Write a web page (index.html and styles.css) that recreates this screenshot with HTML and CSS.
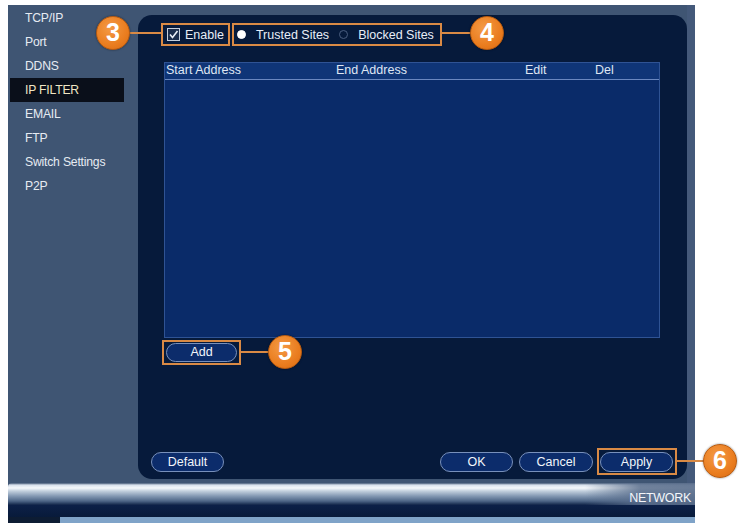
FILE: index.html
```html
<!DOCTYPE html>
<html>
<head>
<meta charset="utf-8">
<link rel="stylesheet" href="styles.css">
</head>
<body>
<div class="page">
  <div class="screen">
    <div class="top">
      <nav class="sidebar">
        <div class="nav-item">TCP/IP</div>
        <div class="nav-item">Port</div>
        <div class="nav-item">DDNS</div>
        <div class="nav-item active">IP FILTER</div>
        <div class="nav-item">EMAIL</div>
        <div class="nav-item">FTP</div>
        <div class="nav-item">Switch Settings</div>
        <div class="nav-item">P2P</div>
      </nav>
      <main class="panel">
        <div class="options">
          <div class="group group-enable">
            <span class="checkbox"><svg width="11" height="11" viewBox="0 0 11 11"><path d="M2 5.5 L4.5 8.5 L9.5 2" fill="none" stroke="#e8eef6" stroke-width="1.6"/></svg></span>
            <span>Enable</span>
          </div>
          <div class="group group-mode">
            <span class="radio on"></span><span>Trusted Sites</span>
            <span class="radio"></span><span>Blocked Sites</span>
          </div>
        </div>
        <div class="table">
          <div class="thead">
            <span>Start Address</span><span>End Address</span><span>Edit</span><span>Del</span>
          </div>
          <div class="tbody"></div>
        </div>
        <div class="add-row">
          <span class="annot annot-add"><button class="btn btn-add">Add</button></span>
        </div>
        <div class="footer">
          <button class="btn">Default</button>
          <div class="spacer"></div>
          <button class="btn">OK</button>
          <button class="btn btn-cancel">Cancel</button>
          <span class="annot annot-apply"><button class="btn">Apply</button></span>
        </div>
      </main>
      <div class="edge"></div>
    </div>
    <div class="bottom">
      <div class="gloss"><span class="title">NETWORK</span></div>
      <div class="band"></div>
      <div class="strip"><span class="tab"></span></div>
    </div>
  </div>

  <div class="line l3"></div>
  <div class="callout c3">3</div>
  <div class="line l4"></div>
  <div class="callout c4">4</div>
  <div class="line l5"></div>
  <div class="callout c5">5</div>
  <div class="line l6"></div>
  <div class="callout c6">6</div>
</div>
</body>
</html>
```

FILE: styles.css
```css
* { box-sizing: border-box; }
html, body { margin: 0; padding: 0; background: #ffffff; }
body {
  font-family: "Liberation Sans", Arial, sans-serif;
  width: 740px;
  height: 523px;
  overflow: hidden;
}
.page { position: relative; width: 740px; height: 523px; padding: 5px 0 0 8px; }

.screen {
  width: 687px;
  height: 518px;
  background: #3f5573;
  display: flex;
  flex-direction: column;
}
.top { display: flex; height: 478px; }

.sidebar {
  width: 130px;
  padding-top: 1px;
  display: flex;
  flex-direction: column;
}
.nav-item {
  height: 24px;
  line-height: 24px;
  margin-left: 2px;
  width: 114px;
  padding-left: 15px;
  font-size: 12.2px;
  color: #e6ebf2;
  letter-spacing: -0.2px;
}
.nav-item.active { background: #0a0f1a; color: #efe6c4; }

.panel {
  width: 549px;
  margin-top: 10px;
  height: 464px;
  background: #061a3b;
  border-radius: 14px;
  padding: 8px 10px 4px 13px;
  display: flex;
  flex-direction: column;
  color: #e8eef7;
  font-size: 12.5px;
}
.edge { width: 8px; background: #44597a; }

.options { display: flex; margin-left: 10px; height: 23px; }
.group {
  display: flex;
  align-items: center;
  border: 2px solid #d98a45;
  height: 23px;
}
.group-enable { padding: 0 4px; gap: 5px; }
.checkbox {
  width: 13px; height: 13px;
  border: 1px solid #c4cedb;
  background: #1a2d4c;
  display: flex; align-items: center; justify-content: center;
}
.group-mode { margin-left: 2px; padding: 0 6px 0 3px; }
.radio {
  width: 9px; height: 9px; border-radius: 50%;
  border: 1px solid #4a5e80;
  margin-right: 10px;
}
.radio.on { background: #ffffff; border-color: #ffffff; }
.group-mode span:nth-child(2) { margin-right: 10px; }

.table {
  margin-top: 16px;
  margin-left: 13px;
  width: 496px;
  height: 276px;
  border: 1px solid #2f5394;
  background: #0a2b69;
  display: flex;
  flex-direction: column;
}
.thead {
  display: grid;
  grid-template-columns: 170px 189px 70px 1fr;
  padding-left: 1px;
  height: 17px;
  line-height: 15px;
  background: #0f3577;
  border-bottom: 1px solid #6a88c0;
  color: #dfe7f3;
}
.tbody { flex: 1; }

.btn {
  font-family: "Liberation Sans", Arial, sans-serif;
  font-size: 12.5px;
  color: #f2f5fa;
  background: #0c2c6b;
  border: 1px solid #7890bb;
  border-radius: 10px;
  height: 20px;
  width: 73px;
  padding: 0;
  line-height: 18px;
  display: block;
}
.annot { display: flex; border: 2px solid #d98a45; }

.add-row { margin-top: 2px; margin-left: 11px; display: flex; }
.annot-add { padding: 1px 2px; }
.btn-add { width: 71px; height: 19px; line-height: 17px; }

.spacer { flex: 1; }
.footer { margin-top: auto; display: flex; align-items: center; }
.btn-cancel { margin-left: 6px; width: 74px; }
.annot-apply { margin-left: 4px; padding: 2px 2px 1px 1px; }

.bottom { display: flex; flex-direction: column; height: 40px; }
.gloss {
  height: 22px;
  border-radius: 4px 0 0 0;
  background:
    linear-gradient(to right, rgba(90,110,140,0) 84%, rgba(90,110,140,0.85) 92%, rgba(90,110,140,0.9) 100%),
    linear-gradient(to bottom, #3f5573 0px, #d8e1ec 2px, #f5f8fb 5px, #c3d0de 8px, #8499b3 13px, #4f6788 18px, #102448 22px);
  display: flex;
  justify-content: flex-end;
  align-items: flex-end;
  padding-right: 4px;
}
.title { color: #f3f6fa; font-size: 12.5px; line-height: 13px; letter-spacing: -0.3px; }
.band { height: 12px; background: linear-gradient(to bottom, #0c2048, #081a3a); }
.strip { height: 6px; background: #7fa3c8; display: flex; }
.tab { width: 52px; background: #0d1c33; }

.callout {
  position: absolute;
  width: 34px; height: 34px;
  border-radius: 50%;
  background: radial-gradient(circle at 40% 35%, #f49a45 0%, #ea7d1f 60%, #d86a12 100%);
  border: 1.5px solid #b65a10;
  box-shadow: 0 0 2px rgba(0,0,0,0.5);
  color: #ffffff;
  font-family: "Liberation Sans", Arial, sans-serif;
  font-weight: bold;
  font-size: 25px;
  line-height: 31px;
  text-align: center;
}
.c3 { left: 96px; top: 16px; }
.c4 { left: 470px; top: 16px; }
.c5 { left: 268px; top: 335px; }
.c6 { left: 703px; top: 444px; }

.line { position: absolute; height: 2px; background: #d98a45; }
.l3 { left: 128px; top: 32px; width: 34px; }
.l4 { left: 441px; top: 32px; width: 32px; }
.l5 { left: 240px; top: 351px; width: 30px; }
.l6 { left: 676px; top: 460px; width: 29px; }
```
